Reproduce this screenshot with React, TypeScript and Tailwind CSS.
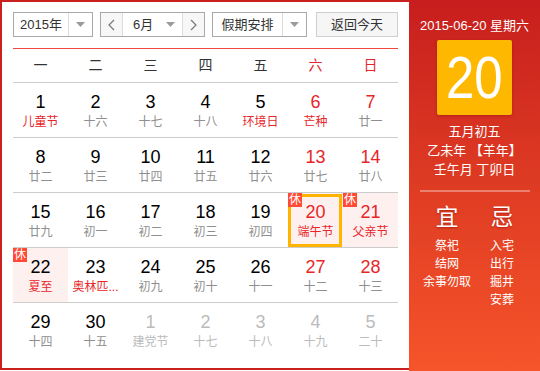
import React from "react";

type Day = { n: number; l: string; fest?: boolean; we?: boolean; rest?: boolean; pink?: boolean; other?: boolean; sel?: boolean };

const rows: Day[][] = [
  [
    { n: 1, l: "儿童节", fest: true },
    { n: 2, l: "十六" },
    { n: 3, l: "十七" },
    { n: 4, l: "十八" },
    { n: 5, l: "环境日", fest: true },
    { n: 6, l: "芒种", fest: true, we: true },
    { n: 7, l: "廿一", we: true },
  ],
  [
    { n: 8, l: "廿二" },
    { n: 9, l: "廿三" },
    { n: 10, l: "廿四" },
    { n: 11, l: "廿五" },
    { n: 12, l: "廿六" },
    { n: 13, l: "廿七", we: true },
    { n: 14, l: "廿八", we: true },
  ],
  [
    { n: 15, l: "廿九" },
    { n: 16, l: "初一" },
    { n: 17, l: "初二" },
    { n: 18, l: "初三" },
    { n: 19, l: "初四" },
    { n: 20, l: "端午节", fest: true, we: true, rest: true, pink: true, sel: true },
    { n: 21, l: "父亲节", fest: true, we: true, rest: true, pink: true },
  ],
  [
    { n: 22, l: "夏至", fest: true, rest: true, pink: true },
    { n: 23, l: "奥林匹...", fest: true },
    { n: 24, l: "初九" },
    { n: 25, l: "初十" },
    { n: 26, l: "十一" },
    { n: 27, l: "十二", we: true },
    { n: 28, l: "十三", we: true },
  ],
  [
    { n: 29, l: "十四" },
    { n: 30, l: "十五" },
    { n: 1, l: "建党节", other: true },
    { n: 2, l: "十七", other: true },
    { n: 3, l: "十八", other: true },
    { n: 4, l: "十九", other: true },
    { n: 5, l: "二十", other: true },
  ],
];

const font = { fontFamily: '"Liberation Sans", Arial, "Noto Sans CJK SC", sans-serif' };

function Tri() {
  return (
    <svg width="9" height="5" viewBox="0 0 9 5">
      <path d="M0 0 L9 0 L4.5 5 Z" fill="#9a9a9a" />
    </svg>
  );
}

function Chev({ dir }: { dir: "l" | "r" }) {
  return (
    <svg width="7" height="12" viewBox="0 0 7 12">
      <polyline
        points={dir === "l" ? "6,1 1,6 6,11" : "1,1 6,6 1,11"}
        fill="none"
        stroke="#777"
        strokeWidth="1.2"
      />
    </svg>
  );
}

export default function App() {
  return (
    <div className="flex w-[540px] h-[371px] bg-white text-[#333]" style={font}>
      <div className="w-[409px] h-[370px] border-l-2 border-t-2 border-b-2 border-[#c9211e] px-[11px] pt-[10px] bg-white">
        {/* toolbar */}
        <div className="flex h-[25px] text-[13px] text-[#333]">
          <div className="flex w-[80px] h-[25px] border border-[#a9a9a9] bg-white">
            <div className="w-[55px] flex items-center justify-center border-r border-[#dcdcdc]">2015年</div>
            <div className="flex-1 flex items-center justify-center"><Tri /></div>
          </div>
          <div className="flex ml-[7px] w-[105px] h-[25px] border border-[#a9a9a9] bg-white">
            <div className="w-[22px] flex items-center justify-center border-r border-[#dcdcdc] bg-[#f7f7f7]"><Chev dir="l" /></div>
            <div className="w-[60px] flex items-center border-r border-[#dcdcdc] pl-[10px]">
              <span>6月</span>
              <span className="ml-[13px] flex"><Tri /></span>
            </div>
            <div className="flex-1 flex items-center justify-center bg-[#f7f7f7]"><Chev dir="r" /></div>
          </div>
          <div className="flex ml-[7px] w-[95px] h-[25px] border border-[#a9a9a9] bg-white">
            <div className="w-[70px] flex items-center justify-center border-r border-[#dcdcdc]">假期安排</div>
            <div className="flex-1 flex items-center justify-center"><Tri /></div>
          </div>
          <div className="ml-[9px] w-[82px] h-[25px] border border-[#cfcfcf] bg-[#f6f6f6] flex items-center justify-center">
            返回今天
          </div>
        </div>
        {/* week header */}
        <div className="mt-[11px] border-t border-[#f2453d] border-b border-b-[#cccccc] h-[35px] grid grid-cols-7 text-[14px]">
          {["一", "二", "三", "四", "五", "六", "日"].map((w, i) => (
            <div key={i} className={`flex items-center justify-center ${i >= 5 ? "text-[#e8262a]" : "text-[#333]"}`}>
              {w}
            </div>
          ))}
        </div>
        {/* days */}
        {rows.map((r, ri) => (
          <div key={ri} className={`grid grid-cols-7 h-[55px] ${ri < 4 ? "border-b border-[#cccccc]" : ""}`}>
            {r.map((d, di) => {
              const numColor = d.other ? "text-[#bbbbbb]" : d.we ? "text-[#e8262a]" : "text-black";
              const lColor = d.other ? "text-[#bbbbbb]" : d.fest ? "text-[#e8262a]" : "text-[#8f8f8f]";
              return (
                <div key={di} className={`relative flex flex-col items-center pt-[9px] ${d.pink ? "bg-[#fff0f0]" : ""}`}>
                  <div className={`text-[18px] leading-[20px] ${numColor}`}>{d.n}</div>
                  <div className={`mt-[1px] text-[12px] leading-[18px] whitespace-nowrap ${lColor}`}>{d.l}</div>
                  {d.sel && <div className="absolute top-[1px] left-0 right-[1px] bottom-0 border-[3px] border-[#ffb400]" />}
                  {d.rest && (
                    <div className="absolute top-0 left-0 w-[14px] h-[14px] bg-[#ff4a36] text-white text-[12px] leading-[14px] flex items-center justify-center">
                      休
                    </div>
                  )}
                </div>
              );
            })}
          </div>
        ))}
      </div>
      {/* right panel */}
      <div className="w-[131px] h-[371px] bg-linear-to-b from-[#c71d1d] to-[#f6542a] text-white flex flex-col items-center">
        <div className="mt-[16px] text-[13px] leading-[20px] whitespace-nowrap">2015-06-20 星期六</div>
        <div className="mt-[4px] w-[75px] h-[75px] bg-[#ffb800] rounded-[2px] shadow-[0_1px_3px_rgba(120,0,0,0.35)] flex items-center justify-center">
          <span className="text-[60px] leading-none scale-x-[0.85] font-normal">20</span>
        </div>
        <div className="mt-[7px] text-[13px] leading-[19px] text-center whitespace-nowrap">
          <div>五月初五</div>
          <div>乙未年 【羊年】</div>
          <div>壬午月 丁卯日</div>
        </div>
        <div className="mt-[11px] w-[110px] h-[2px] bg-[rgba(255,255,255,0.35)]" />
        <div className="mt-[12px] w-[110px] grid grid-cols-2">
          <div className="flex flex-col items-center">
            <div className="text-[23px] leading-[26px] font-normal [text-shadow:0_1px_2px_rgba(120,0,0,0.5)]">宜</div>
            <div className="mt-[7px] text-[12px] leading-[18px] text-center whitespace-nowrap">
              <div>祭祀</div>
              <div>结网</div>
              <div>余事勿取</div>
            </div>
          </div>
          <div className="flex flex-col items-center">
            <div className="text-[23px] leading-[26px] font-normal [text-shadow:0_1px_2px_rgba(120,0,0,0.5)]">忌</div>
            <div className="mt-[7px] text-[12px] leading-[18px] text-center whitespace-nowrap">
              <div>入宅</div>
              <div>出行</div>
              <div>掘井</div>
              <div>安葬</div>
            </div>
          </div>
        </div>
      </div>
    </div>
  );
}
